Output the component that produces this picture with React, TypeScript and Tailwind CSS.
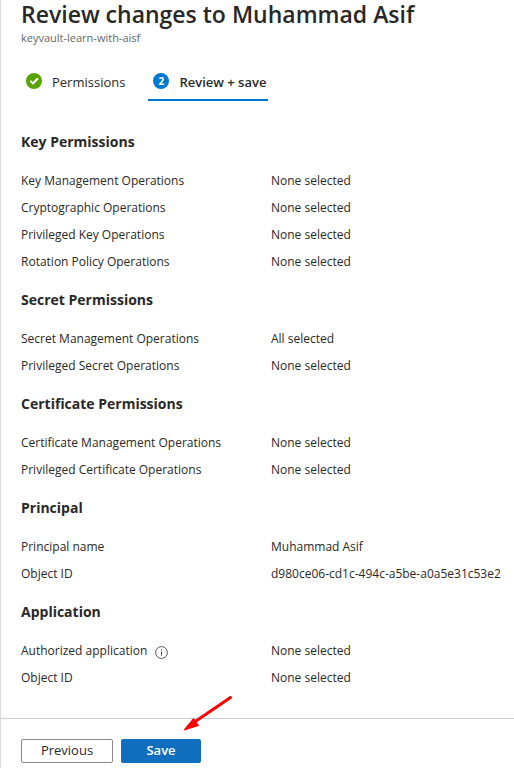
//----------->All Imports<-----------
import { clsx } from "clsx";

type rowProps = {
  label: string;
  value: string;
  info?: boolean;
};
interface sectionProps {
  title: string;
  rows: rowProps[];
}

//------->Everything listed in the review step<---------
const sections: sectionProps[] = [
  {
    title: "Key Permissions",
    rows: [
      { label: "Key Management Operations", value: "None selected" },
      { label: "Cryptographic Operations", value: "None selected" },
      { label: "Privileged Key Operations", value: "None selected" },
      { label: "Rotation Policy Operations", value: "None selected" },
    ],
  },
  {
    title: "Secret Permissions",
    rows: [
      { label: "Secret Management Operations", value: "All selected" },
      { label: "Privileged Secret Operations", value: "None selected" },
    ],
  },
  {
    title: "Certificate Permissions",
    rows: [
      { label: "Certificate Management Operations", value: "None selected" },
      { label: "Privileged Certificate Operations", value: "None selected" },
    ],
  },
  {
    title: "Principal",
    rows: [
      { label: "Principal name", value: "Muhammad Asif" },
      { label: "Object ID", value: "d980ce06-cd1c-494c-a5be-a0a5e31c53e2" },
    ],
  },
  {
    title: "Application",
    rows: [
      { label: "Authorized application", value: "None selected", info: true },
      { label: "Object ID", value: "None selected" },
    ],
  },
];

const CheckBadge = () => (
  <svg className="size-4" viewBox="0 0 16 16" aria-hidden="true">
    <circle cx="8" cy="8" r="8" fill="#57a300" />
    <path d="M4.3 7.9 7 10.5l4.9-5.2" fill="none" stroke="#fff" strokeWidth="2" />
  </svg>
);

const InfoIcon = () => (
  <svg className="size-[13px] mt-1" viewBox="0 0 13 13" aria-hidden="true">
    <circle cx="6.5" cy="6.5" r="5.9" fill="none" stroke="#444" strokeWidth="0.9" />
    <path d="M6.5 5.4v4.3M6.5 3.2v1.2" stroke="#444" strokeWidth="1" />
  </svg>
);

const Section = (props: sectionProps) => {
  const { title, rows } = props;

  return (
    <section className="mb-[13px]">
      <h2 className="mb-[13px] text-sm leading-6 font-bold">{title}</h2>
      <dl className="text-xs">
        {rows.map((row) => (
          <div key={row.label} className="flex min-h-[27px] items-center">
            <dt className="flex w-[250px] shrink-0 items-center gap-2">
              {row.label}
              {row.info && <InfoIcon />}
            </dt>
            <dd className="whitespace-nowrap">{row.value}</dd>
          </div>
        ))}
      </dl>
    </section>
  );
};

const tabClass = "flex h-9 items-start gap-2.5 border-b-2 pt-2 leading-[18px]";

const App = () => {
  return (
    <main className="min-h-screen border-l border-[#dcdcdc] bg-white font-['Open_Sans','Noto_Sans',sans-serif] text-[13px] text-[#292827]">
      <header className="px-5">
        <h1 className="text-[23px] leading-7 font-semibold">
          Review changes to Muhammad Asif
        </h1>
        <p className="mt-0.5 text-[11px] leading-4 text-[#666]">keyvault-learn-with-aisf</p>
      </header>

      <nav className="mt-[19px] flex gap-[23px] px-5" role="tablist">
        <button role="tab" aria-selected="false" className={clsx(tabClass, "border-transparent pl-[5px]")}>
          <CheckBadge />
          Permissions
        </button>
        <button role="tab" aria-selected="true" className={clsx(tabClass, "border-[#0078d4] pr-0.5 pl-[5px] font-semibold")}>
          <span className="flex size-4 items-center justify-center rounded-full bg-[#0078d4] text-[10px] font-bold text-white">
            2
          </span>
          Review + save
        </button>
      </nav>

      <div className="mt-[29px] px-5">
        {sections.map((section) => (
          <Section key={section.title} {...section} />
        ))}
      </div>

      <footer className="relative mt-[27px] flex gap-2 border-t border-[#ccc] px-5 pt-5">
        <button className="h-6 w-[92px] rounded-xs border border-[#8a8886]">Previous</button>
        <button className="h-6 w-20 rounded-xs bg-[#106ebe] font-semibold text-white">Save</button>
        {/* pointer towards the save button */}
        <svg className="absolute -top-6 left-[182px] h-9 w-[50px]" viewBox="0 0 50 36" aria-hidden="true">
          <path d="M47.5 2.5 13 26" stroke="#f00" strokeWidth="3" strokeLinecap="round" />
          <path d="M1 35 10.500 23.500 15.500 30.500Z" fill="#f00" stroke="#f00" strokeLinejoin="round" />
        </svg>
      </footer>
    </main>
  );
};

export default App;
